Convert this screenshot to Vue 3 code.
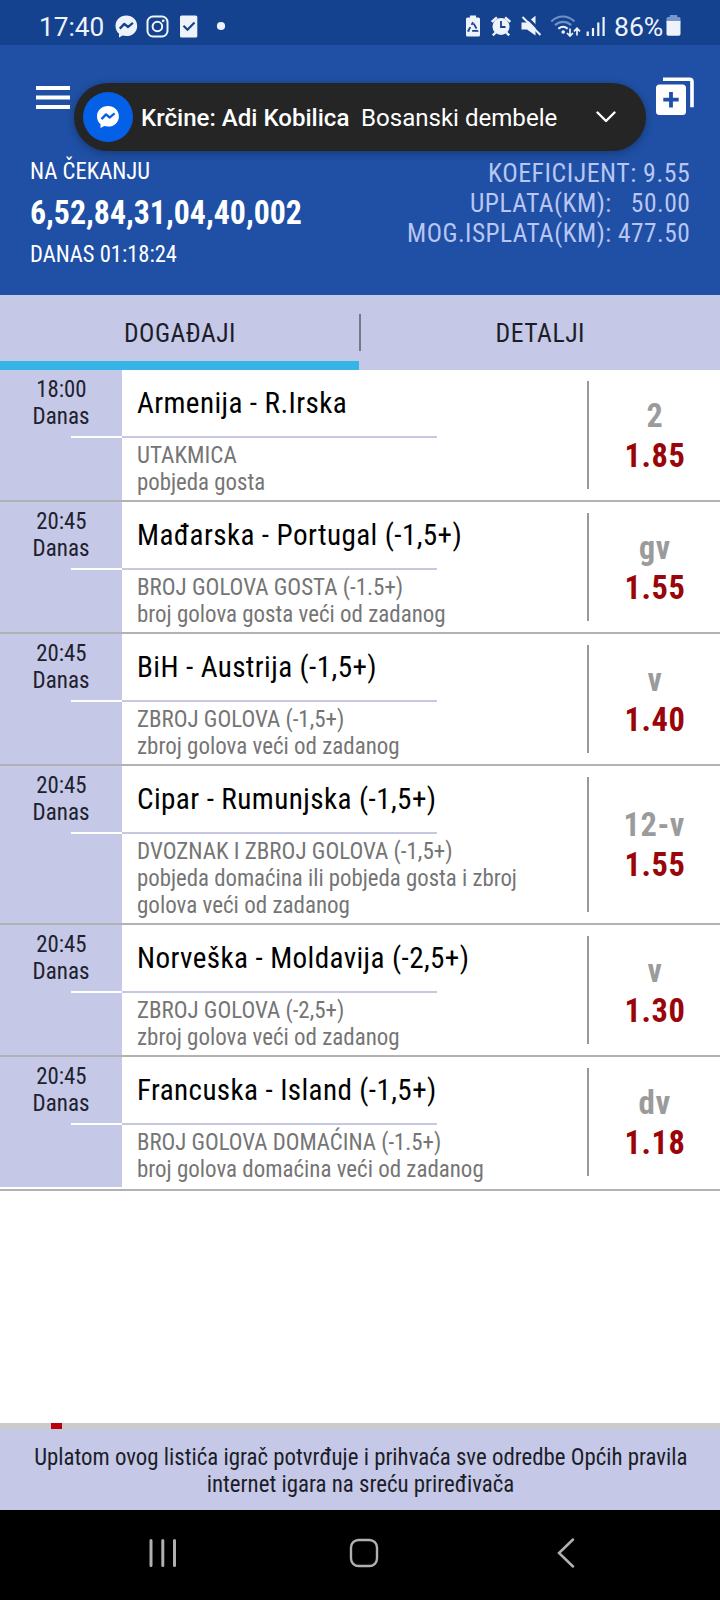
<script setup>
// Condenses a line of text horizontally so that it occupies the given width.
const vFit = {
  mounted(el, { value }) {
    const natural = el.offsetWidth
    if (natural) el.style.transform = `scaleX(${value / natural})`
  },
}

const totals = [
  { text: 'KOEFICIJENT: 9.55', w: 202 },
  { text: 'UPLATA(KM):\u00a0\u00a0 50.00', w: 220 },
  { text: 'MOG.ISPLATA(KM): 477.50', w: 283 },
]

const events = [
  { time: '18:00', title: ['Armenija - R.Irska', 210.5], lines: [['UTAKMICA', 99.5], ['pobjeda gosta', 128]], tip: ['2', 17], odd: '1.85' },
  { time: '20:45', title: ['Mađarska - Portugal (-1,5+)', 325], lines: [['BROJ GOLOVA GOSTA (-1.5+)', 266], ['broj golova gosta veći od zadanog', 309]], tip: ['gv', 32], odd: '1.55' },
  { time: '20:45', title: ['BiH - Austrija (-1,5+)', 240], lines: [['ZBROJ GOLOVA (-1,5+)', 207.5], ['zbroj golova veći od zadanog', 262.5]], tip: ['v', 15], odd: '1.40' },
  { time: '20:45', title: ['Cipar - Rumunjska (-1,5+)', 300], lines: [['DVOZNAK I ZBROJ GOLOVA (-1,5+)', 316], ['pobjeda domaćina ili pobjeda gosta i zbroj', 379.5], ['golova veći od zadanog', 213]], tip: ['12-v', 61], odd: '1.55' },
  { time: '20:45', title: ['Norveška - Moldavija (-2,5+)', 332], lines: [['ZBROJ GOLOVA (-2,5+)', 207.5], ['zbroj golova veći od zadanog', 262.5]], tip: ['v', 15], odd: '1.30' },
  { time: '20:45', title: ['Francuska - Island (-1,5+)', 300], lines: [['BROJ GOLOVA DOMAĆINA (-1.5+)', 304.5], ['broj golova domaćina veći od zadanog', 347]], tip: ['dv', 32], odd: '1.18' },
]
</script>

<template>
  <div class="screen">
    <div class="status">
      <span class="clock"><span v-fit="65.5" class="fit">17:40</span></span>
      <svg class="left-icons" width="116" height="24" viewBox="114 14 116 24">
        <path fill="#eef3fb" d="M126.300 15.500c-6.200 0-10.800 4.500-10.800 10.400 0 3.200 1.300 5.800 3.500 7.700v4l3.700-2c1.100.3 2.300.5 3.600.5 6.200 0 10.900-4.400 10.900-10.200s-4.700-10.400-10.900-10.400z" />
        <path fill="none" stroke="#15428f" stroke-width="2.300" stroke-linejoin="round" d="M119.800 28.600l4.500-4.700 3.800 3.100 4.800-4.100" />
        <g fill="none" stroke="#eef3fb" stroke-width="2">
          <rect x="147.500" y="16.500" width="20" height="20" rx="5.500" />
          <circle cx="157.400" cy="26.500" r="4.800" />
        </g>
        <circle cx="163.200" cy="20.800" r="1.400" fill="#eef3fb" />
        <rect x="180" y="15.500" width="17.300" height="22" rx="1.600" fill="#eef3fb" />
        <path fill="none" stroke="#15428f" stroke-width="2.200" d="M183.500 25.700l4 4 7-7.200" />
        <circle cx="221" cy="26" r="4.100" fill="#eef3fb" />
      </svg>
      <svg class="right-icons" width="144" height="26" viewBox="464 13 144 26">
        <path fill="#eef3fb" d="M470 15.500h6v2h2.500q1.500 0 1.500 1.500v16q0 1.500-1.500 1.500h-11q-1.500 0-1.500-1.500v-16q0-1.500 1.500-1.500h2.500z" />
        <path fill="none" stroke="#15428f" stroke-width="1.800" stroke-dasharray="5.700 2.600" stroke-dashoffset="-1.500" stroke-linejoin="round" d="M473 22.300l4.800 8.600h-9.600z" />
        <circle cx="501" cy="26.500" r="8.500" fill="#eef3fb" />
        <path fill="none" stroke="#15428f" stroke-width="1.800" d="M501 21v6h4.500" />
        <path fill="none" stroke="#eef3fb" stroke-width="2.400" d="M491.700 21.800l5.200-4.500M510.300 21.800l-5.200-4.500M495.700 32.500l-2.900 2.900M506.300 32.500l2.900 2.900" />
        <path fill="#eef3fb" d="M521.500 22.500h5.500l8.500-6.800v19.800l-8.500-6h-5.500z" />
        <path stroke="#15428f" stroke-width="2.600" d="M524 14.500l19 19" />
        <path stroke="#eef3fb" stroke-width="2" d="M522.500 17l18 18" />
        <g fill="none" stroke-width="2.100">
          <path stroke="#6f90c5" d="M551.300 21.400c7-6.500 16-6.500 23.200 0M555 25.100c5-4.300 11.300-4.300 16.200 0" />
          <path stroke="#eef3fb" d="M558.300 28.800c3.100-2.600 6.700-2.500 9.400 0" />
        </g>
        <circle cx="563.200" cy="32" r="1.800" fill="#eef3fb" />
        <path fill="none" stroke="#eef3fb" stroke-width="1.700" d="M570 28.500v7.500M567 33l3 3 3-3M577 35.500v-7M574 31.300l3-3 3 3" />
        <path stroke="#eef3fb" stroke-width="2.200" d="M587.700 31.500v4.500M593 28v8M598.300 22.500v13.500M603.600 17v19" />
      </svg>
      <span class="percent"><span v-fit="49" class="fit">86%</span></span>
      <svg class="battery" width="16" height="22" viewBox="0 0 16 22">
        <path fill="#7897c9" d="M3.800 0h7.400v2h1.800q1.500 0 1.500 1.500v4h-14v-4q0-1.500 1.500-1.500h1.800z" />
        <path fill="#eef3fb" d="M.5 6h14v13q0 1.700-1.700 1.700h-10.600q-1.700 0-1.700-1.700z" />
      </svg>
    </div>

    <div class="header">
      <div class="toolbar">
        <svg width="34" height="24" viewBox="0 0 34 24"><path stroke="#fff" stroke-width="4" d="M0 2h34M0 11.500h34M0 21h34" /></svg>
        <svg width="39" height="39" viewBox="0 0 39 39">
          <rect x="0" y="7.500" width="30" height="30.500" rx="3.500" fill="#fff" />
          <path fill="none" stroke="#fff" stroke-width="3.600" d="M7 2.300h26.500q2.500 0 2.500 2.500v25.500" />
          <path fill="none" stroke="#1f50a5" stroke-width="3.800" d="M15 15v15.500M7.300 22.700h15.400" />
        </svg>
      </div>
      <div class="summary">
        <div class="ticket">
          <div class="small"><span v-fit="120.500" class="fit">NA ČEKANJU</span></div>
          <div class="code"><span v-fit="272" class="fit">6,52,84,31,04,40,002</span></div>
          <div class="small"><span v-fit="147" class="fit">DANAS 01:18:24</span></div>
        </div>
        <div class="totals">
          <div v-for="t in totals" :key="t.text"><span v-fit="t.w" class="fit right">{{ t.text }}</span></div>
        </div>
      </div>
      <div class="notice">
        <div class="avatar">
          <svg width="24" height="24" viewBox="0 0 24 24">
            <path fill="#fff" d="M12 1C5.700 1 1 5.500 1 11.400c0 3.200 1.300 5.800 3.500 7.700v4l3.700-2c1.200.3 2.400.5 3.800.5 6.200 0 10.900-4.400 10.900-10.200S18.200 1 12 1z" />
            <path fill="none" stroke="#0460e6" stroke-width="2.300" stroke-linejoin="round" d="M5.500 14.100L10 9.400l3.800 3.100 4.800-4.100" />
          </svg>
        </div>
        <div class="sender"><span v-fit="208.500" class="fit">Krčine: Adi Kobilica</span></div>
        <div class="message"><span v-fit="196.500" class="fit">Bosanski dembele</span></div>
        <svg class="chevron" width="20" height="12" viewBox="0 0 20 12"><path fill="none" stroke="#fff" stroke-width="2.400" stroke-linecap="round" stroke-linejoin="round" d="M1.500 1.500l8.500 8.500 8.500-8.500" /></svg>
      </div>
    </div>

    <div class="tabs">
      <div class="tab active"><span v-fit="112" class="fit center">DOGAĐAJI</span></div>
      <div class="tab-divider"></div>
      <div class="tab"><span v-fit="89" class="fit center">DETALJI</span></div>
    </div>

    <div class="events">
      <div v-for="(e, i) in events" :key="i" class="row">
        <div class="when">
          <span v-fit="50.500" class="fit center">{{ e.time }}</span>
          <span v-fit="57" class="fit center">Danas</span>
          <i class="rule"></i>
        </div>
        <div class="info">
          <div class="title"><span v-fit="e.title[1]" class="fit">{{ e.title[0] }}</span></div>
          <div class="desc">
            <div v-for="l in e.lines" :key="l[0]"><span v-fit="l[1]" class="fit">{{ l[0] }}</span></div>
          </div>
        </div>
        <div class="odds">
          <span v-fit="e.tip[1]" class="fit center tip">{{ e.tip[0] }}</span>
          <span v-fit="61" class="fit center odd">{{ e.odd }}</span>
        </div>
      </div>
    </div>

    <div class="progress"><div class="mark"></div></div>
    <div class="footer">
      <span v-fit="653.500" class="fit center">Uplatom ovog listića igrač potvrđuje i prihvaća sve odredbe Općih pravila</span>
      <span v-fit="307.500" class="fit center">internet igara na sreću priređivača</span>
    </div>
    <div class="nav">
      <svg width="28" height="30" viewBox="0 0 28 30"><path stroke="#b0b0b0" stroke-width="3" stroke-linecap="round" d="M2 2.500v25M13.800 2.500v25M25.500 2.500v25" /></svg>
      <svg class="home" width="30" height="30" viewBox="0 0 30 30"><rect x="2" y="2" width="26" height="26" rx="7.500" fill="none" stroke="#b0b0b0" stroke-width="2.400" /></svg>
      <svg width="18" height="30" viewBox="0 0 18 30"><path fill="none" stroke="#b0b0b0" stroke-width="2.500" stroke-linecap="round" d="M16 1.500L2 15l14 13.500" /></svg>
    </div>
  </div>
</template>

<style>
body { margin: 0; }
</style>

<style scoped>
.screen {
  width: 720px;
  height: 1600px;
  display: flex;
  flex-direction: column;
  overflow: hidden;
  background: #fff;
  font-family: "Roboto Condensed", Roboto, "Liberation Sans", sans-serif;
  font-stretch: 75%;
  font-size: 23px;
  line-height: 27px;
}
svg { display: block; flex: none; }
.fit { display: inline-block; white-space: nowrap; transform-origin: left center; }
.fit.right { transform-origin: right center; }
.fit.center { transform-origin: center center; }
.status {
  height: 45px;
  box-sizing: border-box;
  display: flex;
  align-items: flex-start;
  padding-left: 39px;
  background: #15428f;
  color: #eef3fb;
  font-family: Roboto, sans-serif;
  font-stretch: 100%;
  font-size: 26px;
  line-height: 30px;
}
.clock { width: 75px; padding-top: 12px; }
.left-icons { margin-top: 14px; }
.right-icons { margin: 13px 0 0 234px; }
.percent { width: 58px; padding-top: 12px; box-sizing: border-box; padding-left: 6px; }
.battery { margin: 15px 0 0; }
.header { height: 250px; background: #1f50a5; color: #fff; position: relative; }
.toolbar {
  height: 109px;
  box-sizing: border-box;
  padding: 32px 25px 0 36px;
  display: flex;
  justify-content: space-between;
}
.toolbar svg:first-child { margin-top: 9px; }
.summary { display: flex; justify-content: space-between; padding: 0 30px 0 29px; }
.ticket { padding: 4px 0 0 .5px; }
.small { height: 27px; }
.code { font-size: 33px; font-weight: 700; line-height: 38px; height: 38px; margin: 9px 0; }
.totals { padding-top: 4px; font-size: 26px; line-height: 30px; letter-spacing: .5px; color: #b9c6f3; text-align: right; }
.notice {
  position: absolute;
  left: 74px;
  top: 38px;
  width: 572px;
  height: 68px;
  border-radius: 34px;
  background: #252525;
  box-shadow: 0 2px 8px rgba(0, 0, 0, .3);
  display: flex;
  align-items: center;
  box-sizing: border-box;
  padding: 0 30px 0 9px;
  font-family: Roboto, sans-serif;
  font-stretch: 100%;
  font-size: 24px;
}
.avatar {
  width: 50px;
  height: 50px;
  border-radius: 50%;
  background: #0460e6;
  display: flex;
  align-items: center;
  justify-content: center;
}
.sender { width: 212px; margin-left: 8px; padding-top: 2px; font-weight: 500; white-space: nowrap; }
.message { width: 198px; margin-left: 8px; padding-top: 2px; white-space: nowrap; }
.chevron { margin-left: auto; }
.tabs {
  height: 75px;
  display: flex;
  align-items: stretch;
  background: #c5c8e7;
  color: #1c1d28;
  font-size: 26px;
  letter-spacing: .5px;
}
.tab {
  flex: 1;
  display: flex;
  align-items: center;
  justify-content: center;
  box-sizing: border-box;
  padding-top: 10px;
  border-bottom: 9px solid transparent;
}
.tab.active { border-bottom-color: #35b4e5; }
.tab-divider { width: 2px; height: 37px; margin-top: 19px; background: #777986; }
.events { height: 1053px; }
.row { display: flex; min-height: 130px; border-bottom: 2px solid #b2b2b2; }
.row:last-child { padding-bottom: 2px; }
.when {
  width: 122px;
  box-sizing: border-box;
  padding-top: 6px;
  background: #c5c8e7;
  color: #20212d;
  display: flex;
  flex-direction: column;
  align-items: center;
}
.rule { align-self: flex-end; width: 51px; height: 2px; margin-top: 6px; background: #fff; }
.info { width: 465px; }
.title {
  width: 315px;
  height: 68px;
  box-sizing: border-box;
  padding: 16px 0 0 15px;
  border-bottom: 2px solid #c5c8e0;
  color: #000;
  font-size: 29.500px;
  line-height: 35px;
  letter-spacing: .4px;
  white-space: nowrap;
}
.desc { padding: 4px 0 4px 15px; color: #757575; }
.desc div { height: 27px; }
.odds {
  flex: 1;
  margin: 11px 0;
  border-left: 2px solid #999;
  display: flex;
  flex-direction: column;
  align-items: center;
  justify-content: center;
  font-size: 34px;
  line-height: 40px;
  letter-spacing: .6px;
  font-weight: 700;
}
.row:nth-child(4) .odds { padding-bottom: 2px; }
.tip { color: #9b9b9b; }
.odd { color: #990508; }
.progress { height: 6px; background: #cbcbcb; padding-left: 51px; }
.mark { width: 11px; height: 6px; background: #b9000a; }
.footer {
  height: 81px;
  box-sizing: border-box;
  padding: 15px 0 0 1px;
  background: #c5c8e7;
  color: #1c1d28;
  display: flex;
  flex-direction: column;
  align-items: center;
}
.nav {
  height: 90px;
  box-sizing: border-box;
  padding: 28px 145px 0 149px;
  display: flex;
  justify-content: space-between;
  background: #000;
}
.home { margin-right: 7px; }
</style>
